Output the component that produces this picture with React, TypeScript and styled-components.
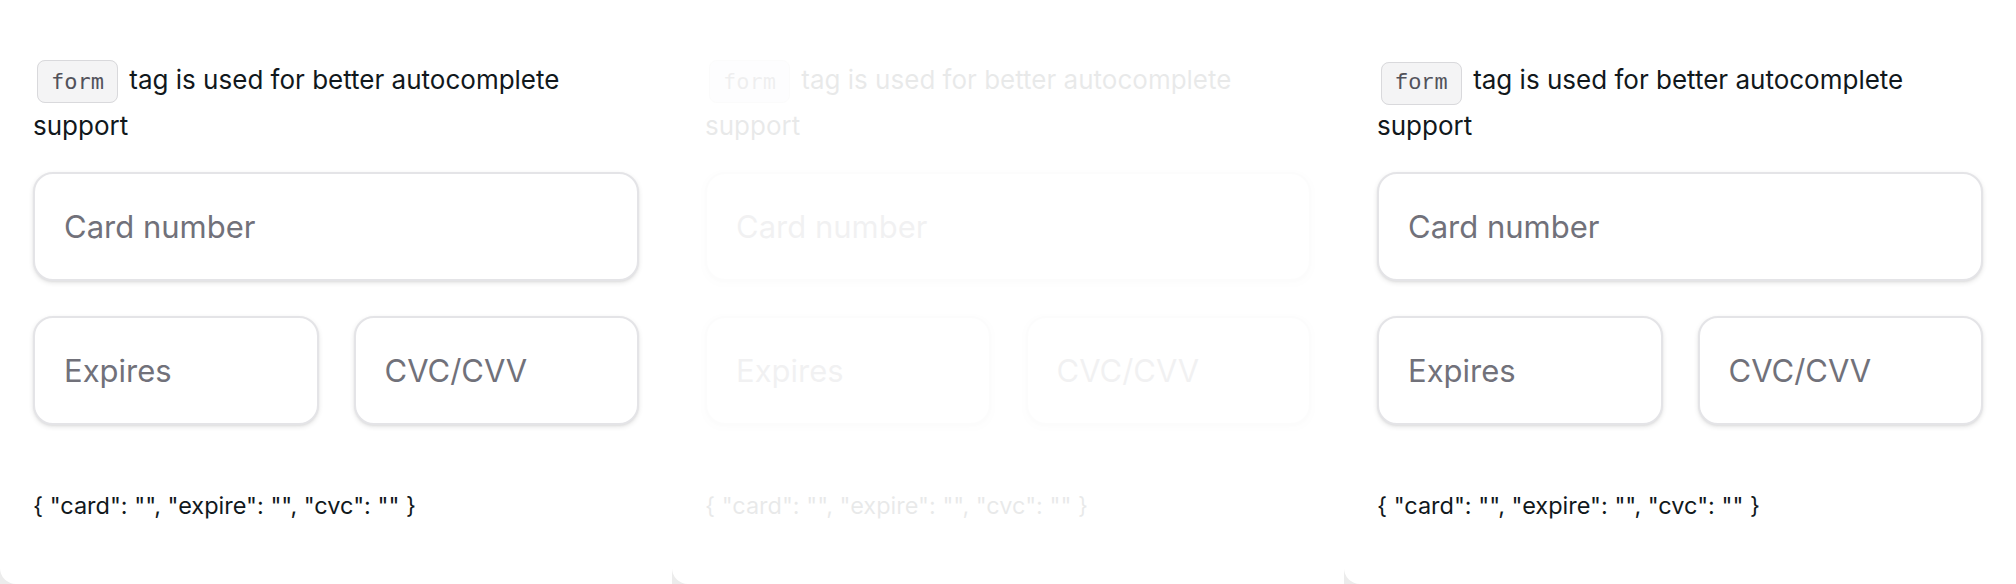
import styled, { createGlobalStyle } from "styled-components";

const GlobalStyle = createGlobalStyle`
  html, body {
    margin: 0;
    padding: 0;
    background: #ececec;
  }
  * {
    box-sizing: border-box;
  }
`;

const panels = [
  { mono: `"DejaVu Sans Mono", monospace`, faded: false },
  { mono: `"DejaVu Sans Mono", monospace`, faded: true },
  { mono: `"Liberation Mono", monospace`, faded: false },
];

const output = `{ "card": "", "expire": "", "cvc": "" }`;

const Page = styled.div`
  display: grid;
  grid-template-columns: repeat(3, 1fr);
  width: 2016px;
  height: 584px;
  overflow: hidden;
`;

const Card = styled.section`
  background: #ffffff;
  border-bottom-left-radius: 16px;
  padding: 57px 33px 0;
  font-family: Inter, "Noto Sans", sans-serif;
  color: #11181c;
`;

const Content = styled.div<{ $faded: boolean }>`
  opacity: ${(p) => (p.$faded ? 0.09 : 1)};
`;

const Note = styled.p`
  margin: 0;
  font-size: 26px;
  line-height: 46px;
`;

const Code = styled.code<{ $font: string }>`
  font-family: ${(p) => p.$font};
  font-size: 22px;
  line-height: 1;
  color: #52525b;
  background: #f4f4f5;
  border: 1px solid #d9d9dc;
  border-radius: 8px;
  padding: 8px 13px;
  margin: 0 4px;
`;

const Form = styled.form`
  display: grid;
  grid-template-columns: 1fr 1fr;
  gap: 35px;
  margin-top: 23px;
`;

const Field = styled.input<{ $wide?: boolean }>`
  grid-column: ${(p) => (p.$wide ? "1 / -1" : "auto")};
  width: 100%;
  height: 109px;
  padding: 0 29px;
  border: 2px solid #e4e4e7;
  border-radius: 20px;
  background: #ffffff;
  box-shadow: 0 2px 5px rgba(0, 0, 0, 0.1), 0 1px 2px rgba(0, 0, 0, 0.05);
  font-family: Inter, "Noto Sans", sans-serif;
  font-size: 31px;
  color: #11181c;
  outline: none;

  &::placeholder {
    color: #71717a;
  }
`;

const Output = styled.p`
  margin: 61px 0 0;
  font-size: 23.5px;
  line-height: 40px;
`;

const Panel = ({ mono, faded }: { mono: string; faded: boolean }) => (
  <Card>
    <Content $faded={faded}>
      <Note>
        <Code $font={mono}>form</Code> tag is used for better autocomplete support
      </Note>
      <Form onSubmit={(e) => e.preventDefault()}>
        <Field $wide name="card" autoComplete="cc-number" placeholder="Card number" />
        <Field name="expire" autoComplete="cc-exp" placeholder="Expires" />
        <Field name="cvc" autoComplete="cc-csc" placeholder="CVC/CVV" />
      </Form>
      <Output>{output}</Output>
    </Content>
  </Card>
);

export default function App() {
  return (
    <>
      <GlobalStyle />
      <Page>
        {panels.map((p, i) => (
          <Panel key={i} mono={p.mono} faded={p.faded} />
        ))}
      </Page>
    </>
  );
}
